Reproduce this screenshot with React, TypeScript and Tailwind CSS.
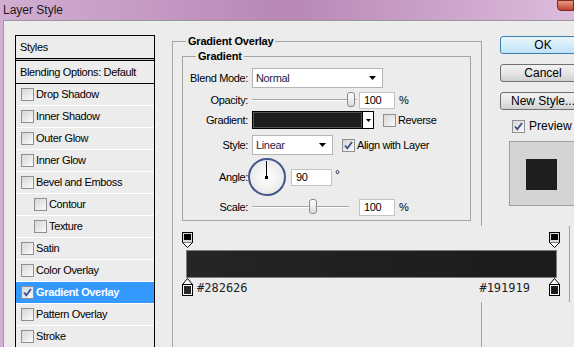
import React from "react";

const ui = "font-['Liberation_Sans',Arial,sans-serif] text-[11px] tracking-[-0.35px] text-[#000]";

function Box({ checked }: { checked?: boolean }) {
  return (
    <span className="flex h-[13px] w-[13px] shrink-0 items-center justify-center border border-[#8e8f8f] bg-linear-to-br from-[#d6d6d6] to-[#fbfbfb]">
      {checked && (
        <svg width="11" height="11" viewBox="0 0 11 11">
          <path d="M2 5.5 L4.3 8.3 L9 2" fill="none" stroke="#3a4f8c" strokeWidth="1.8" />
        </svg>
      )}
    </span>
  );
}

const layers = [
  { label: "Drop Shadow" },
  { label: "Inner Shadow" },
  { label: "Outer Glow" },
  { label: "Inner Glow" },
  { label: "Bevel and Emboss" },
  { label: "Contour", sub: true },
  { label: "Texture", sub: true },
  { label: "Satin" },
  { label: "Color Overlay" },
  { label: "Gradient Overlay", active: true },
  { label: "Pattern Overlay" },
  { label: "Stroke" },
];

function StylesList() {
  return (
    <div className="w-[140px] border-x border-t border-black">
      <div className="flex h-[23px] items-center border-b border-black pl-[4px]">Styles</div>
      <div className="h-[1px] bg-[#bdbdbd]" />
      <div className="flex h-[24px] items-center border-y border-black pl-[4px]">Blending Options: Default</div>
      {layers.map((l) => (
        <div
          key={l.label}
          className={
            "flex h-[22px] items-center gap-[2px] border-b border-white " +
            (l.sub ? "pl-[18px] " : "pl-[5px] ") +
            (l.active ? "bg-[#3399ff] font-bold text-white" : "")
          }
        >
          <Box checked={l.active} />
          <span>{l.label}</span>
        </div>
      ))}
    </div>
  );
}

function Arrow() {
  return (
    <svg width="7" height="4" viewBox="0 0 7 4">
      <path d="M0 0 H7 L3.5 4 Z" fill="#000" />
    </svg>
  );
}

function Select({ value, w }: { value: string; w: string }) {
  return (
    <div className={`flex h-[20px] items-center justify-between border border-[#b4b4b4] bg-white pl-[3px] pr-[6px] text-[#1c1c4a] ${w}`}>
      <span>{value}</span>
      <Arrow />
    </div>
  );
}

function Slider({ track, thumb }: { track: string; thumb: string }) {
  return (
    <div className="relative h-full w-[111px]">
      <div className={`absolute left-[4px] top-[8px] h-[2px] border-t border-[#a6a6a6] bg-white ${track}`} />
      <div className={`absolute top-[1px] h-[15px] w-[8px] rounded-[3px] border border-[#8a8a8a] bg-linear-to-b from-white to-[#dcdcdc] ${thumb}`} />
    </div>
  );
}

function Field({ value, w }: { value: string; w: string }) {
  return (
    <div className={`flex h-[17px] items-center border border-[#c3c3c3] bg-white pl-[4px] ${w}`}>{value}</div>
  );
}

function Row({ label, h, mt, children }: { label: string; h: string; mt: string; children: React.ReactNode }) {
  return (
    <div className={`flex items-center ${h} ${mt}`}>
      <span className="w-[65px] text-right">{label}</span>
      {children}
    </div>
  );
}

function Dial() {
  return (
    <div className="relative h-[38px] w-[38px] rounded-full border-2 border-[#44558b] bg-radial from-white to-[#e2e2e2]">
      <div className="absolute left-[16px] top-[1px] h-[17px] w-[1px] bg-black" />
      <div className="absolute left-[15px] top-[16px] h-[3px] w-[3px] bg-black" />
    </div>
  );
}

function StopTop() {
  return (
    <svg width="11" height="16" viewBox="0 0 11 16">
      <rect x="0.5" y="0.5" width="10" height="10" fill="#d8d8d8" stroke="#000" />
      <rect x="2" y="2" width="7" height="6" fill="#000" />
      <path d="M0.5 10.5 L5.5 15.5 L10.5 10.5" fill="#fff" stroke="#000" />
    </svg>
  );
}

function StopBottom({ color }: { color: string }) {
  return (
    <svg width="11" height="18" viewBox="0 0 11 18">
      <path d="M0.5 6.5 L5.5 0.5 L10.5 6.5 Z" fill="#fff" stroke="#000" />
      <rect x="0.5" y="6.5" width="10" height="11" fill="#fff" stroke="#000" />
      <rect x="2" y="8" width="7" height="8" fill={color} />
    </svg>
  );
}

function GradientEditor() {
  return (
    <div className="absolute left-[173px] top-[226px] h-[76px] w-[397px] border-r border-[#a0a0a0] bg-[#ececec]">
      <div className="absolute left-[9px] top-[6px]"><StopTop /></div>
      <div className="absolute left-[376px] top-[6px]"><StopTop /></div>
      <div className="absolute left-[13px] top-[24px] h-[28px] w-[371px] border border-[#7d7d7d] bg-linear-to-r from-[#262424] to-[#1b1b1b]" />
      <div className="absolute left-[9px] top-[52px]"><StopBottom color="#282626" /></div>
      <div className="absolute left-[376px] top-[52px]"><StopBottom color="#191919" /></div>
      <div className="absolute left-[24px] right-[39px] top-[55px] flex justify-between font-['DejaVu_Sans_Mono',monospace] text-[12px] leading-[14px] tracking-normal text-[#222]">
        <span>#282626</span>
        <span>#191919</span>
      </div>
    </div>
  );
}

function Button({ children, primary, mt }: { children: React.ReactNode; primary?: boolean; mt: string }) {
  return (
    <div
      className={
        `flex h-[18px] w-[86px] items-center justify-center rounded-[3px] border text-[12px] tracking-normal ${mt} ` +
        (primary
          ? "border-[#3c7fb1] bg-linear-to-b from-[#eaf6fd] to-[#bfe2f6]"
          : "border-[#707070] bg-linear-to-b from-[#f2f2f2] via-[#e6e6e6] to-[#d0d0d0]")
      }
    >
      {children}
    </div>
  );
}

export default function App() {
  return (
    <div className={`relative h-[347px] w-[574px] overflow-hidden bg-linear-to-r from-[#d2aed2] via-[#b887b5] to-[#dcbcdc] ${ui}`}>
      <div className="flex h-[20px] items-center pl-[3px] text-[12px] tracking-normal text-[#1a1a1a]">Layer Style</div>
      <div className="absolute right-0 top-0 h-[11px] w-[17px] rounded-bl-[4px] border border-[#7a2a20] bg-linear-to-b from-[#e49a86] to-[#c2402c]" />
      <div className="ml-[3px] flex h-[327px] border-l border-t border-[#9a9a9a] bg-[#ececec]">
        <div className="pl-[11px] pt-[14px]">
          <StylesList />
        </div>

        <div className="ml-[17px] mt-[14px]">
          <fieldset className="h-[400px] w-[310px] border border-[#a5a5a5]">
            <legend className="ml-[13px] px-[2px] font-bold leading-[13px] tracking-[-0.2px]">Gradient Overlay</legend>
            <fieldset className="ml-[9px] mt-[2px] w-[289px] border border-[#a5a5a5] pb-[4px]">
              <legend className="ml-[13px] px-[2px] font-bold leading-[13px] tracking-[-0.2px]">Gradient</legend>
              <Row label="Blend Mode:" h="h-[20px]" mt="mt-[5px]">
                <span className="ml-[4px]"><Select value="Normal" w="w-[131px]" /></span>
              </Row>
              <Row label="Opacity:" h="h-[18px]" mt="mt-[3px]">
                <Slider track="w-[105px]" thumb="left-[99px]" />
                <Field value="100" w="w-[36px]" />
                <span className="ml-[4px]">%</span>
              </Row>
              <Row label="Gradient:" h="h-[18px]" mt="mt-[2px]">
                <div className="ml-[4px] flex h-[18px] w-[122px] border border-black bg-white">
                  <div className="flex-1 border border-[#555] bg-[#1f1e1e]" />
                  <div className="flex w-[11px] items-center justify-center border-l border-black">
                    <svg width="5" height="3" viewBox="0 0 5 3"><path d="M0 0 H5 L2.5 3 Z" fill="#000" /></svg>
                  </div>
                </div>
                <span className="ml-[9px]"><Box /></span>
                <span className="ml-[2px]">Reverse</span>
              </Row>
              <Row label="Style:" h="h-[20px]" mt="mt-[6px]">
                <span className="ml-[4px]"><Select value="Linear" w="w-[81px]" /></span>
                <span className="ml-[9px]"><Box checked /></span>
                <span className="ml-[2px]">Align with Layer</span>
              </Row>
              <Row label="Angle:" h="h-[38px]" mt="mt-[3px]">
                <Dial />
                <span className="ml-[5px]"><Field value="90" w="w-[41px]" /></span>
                <span className="ml-[3px] self-start pt-[8px] text-[12px]">°</span>
              </Row>
              <Row label="Scale:" h="h-[18px]" mt="mt-[2px]">
                <Slider track="w-[97px]" thumb="left-[61px]" />
                <Field value="100" w="w-[36px]" />
                <span className="ml-[4px]">%</span>
              </Row>
            </fieldset>
          </fieldset>
        </div>

        <div className="ml-[18px] flex flex-col">
          <Button primary mt="mt-[15px]">OK</Button>
          <Button mt="mt-[10px]">Cancel</Button>
          <Button mt="mt-[10px]">New Style...</Button>
          <div className="mt-[9px] flex h-[14px] items-center gap-[4px] pl-[12px] text-[12px] tracking-normal">
            <Box checked />
            <span>Preview</span>
          </div>
          <div className="ml-[9px] mt-[8px] h-[65px] w-[80px] border border-[#a0a0a0] bg-[#d4d4d4] pl-[16px] pt-[17px]">
            <div className="h-[31px] w-[31px] bg-[#1e1e1e]" />
          </div>
        </div>
      </div>
      <GradientEditor />
    </div>
  );
}
